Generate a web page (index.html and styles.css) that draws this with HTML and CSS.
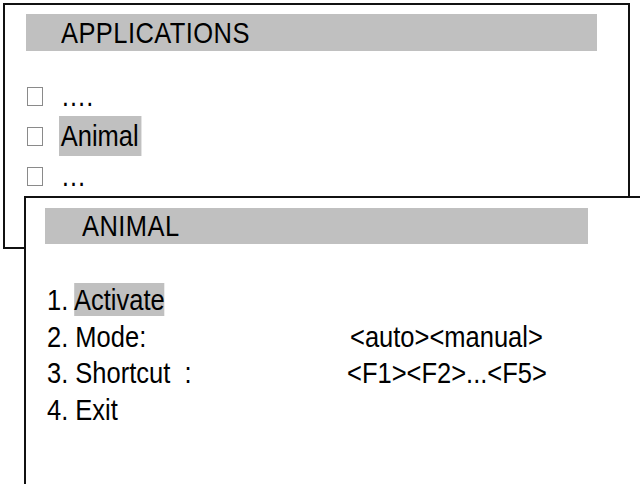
FILE: index.html
```html
<!DOCTYPE html>
<html lang="en">
<head>
    <meta charset="UTF-8">
    <meta name="viewport" content="width=device-width, initial-scale=1.0">
    <title>Applications - Animal</title>
    <link rel="stylesheet" href="styles.css">
</head>
<body>
    <div class="screen">
        <div class="window apps">
            <div class="title"><span class="narrow">APPLICATIONS</span></div>
            <ul class="app-list">
                <li><span class="box"></span><span class="item narrow">….</span></li>
                <li><span class="box"></span><span class="item narrow selected">Animal</span></li>
                <li><span class="box"></span><span class="item narrow">…</span></li>
            </ul>
        </div>

        <div class="window animal">
            <div class="title"><span class="narrow">ANIMAL</span></div>
            <div class="menu">
                <div class="label narrow">1. <span class="selected">Activate</span></div>
                <div class="value"></div>
                <div class="label narrow">2. Mode:</div>
                <div class="value narrow">&lt;auto&gt;&lt;manual&gt;</div>
                <div class="label narrow">3. Shortcut&nbsp; :</div>
                <div class="value narrow shift">&lt;F1&gt;&lt;F2&gt;...&lt;F5&gt;</div>
                <div class="label narrow">4. Exit</div>
                <div class="value"></div>
            </div>
        </div>
    </div>
</body>
</html>
```

FILE: styles.css
```css
body {
    margin: 0;
    background: #fff;
    color: #000;
    font-family: "Liberation Sans", Arial, sans-serif;
    font-size: 30px;
}
.screen {
    position: relative;
    width: 640px;
    height: 484px;
    overflow: hidden;
}
.window {
    background: #fff;
    border: 2px solid #111;
}
.narrow {
    display: inline-block;
    white-space: nowrap;
    transform: scaleX(0.85);
    transform-origin: left center;
}
.title {
    background: #c0c0c0;
    letter-spacing: 0.5px;
}
.selected {
    background: #c0c0c0;
}

/* applications window */
.apps {
    margin: 3px 0 0 3px;
    width: 623px;
    height: 242px;
}
.apps .title {
    margin: 9px 0 0 21px;
    width: 536px;
    height: 37px;
    line-height: 37px;
    padding-left: 35px;
}
.app-list {
    list-style: none;
    margin: 25px 0 0 22px;
    padding: 0;
}
.app-list li {
    display: flex;
    align-items: center;
    height: 40px;
    line-height: 40px;
}
.box {
    width: 14px;
    height: 17px;
    border: 1px solid #8a8a8a;
    margin-right: 16px;
}
.item {
    padding: 0 3px 0 2px;
}

/* animal window, lying over the first one */
.animal {
    position: absolute;
    left: 24px;
    top: 196px;
    width: 700px;
    height: 400px;
}
.animal .title {
    margin: 10px 0 0 19px;
    width: 506px;
    height: 36px;
    line-height: 36px;
    padding-left: 37px;
}
.menu {
    display: grid;
    grid-template-columns: 303px auto;
    margin: 38px 0 0 21px;
    line-height: 36.5px;
}
.menu .shift {
    margin-left: -3px;
}
```
